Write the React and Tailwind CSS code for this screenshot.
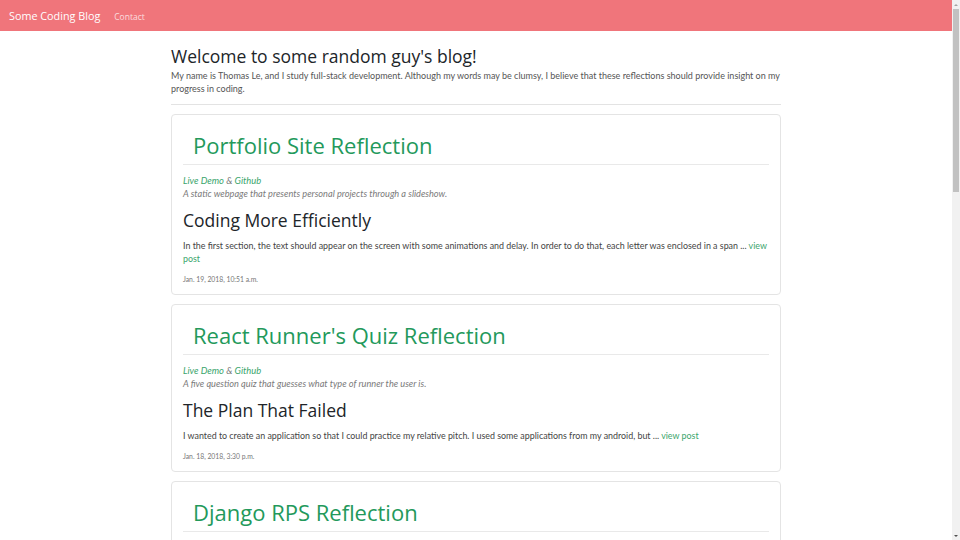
const posts = [
  {
    title: "Portfolio Site Reflection",
    desc: "A static webpage that presents personal projects through a slideshow.",
    heading: "Coding More Efficiently",
    body: "In the first section, the text should appear on the screen with some animations and delay. In order to do that, each letter was enclosed in a span ...",
    date: "Jan. 19, 2018, 10:51 a.m.",
  },
  {
    title: "React Runner's Quiz Reflection",
    desc: "A five question quiz that guesses what type of runner the user is.",
    heading: "The Plan That Failed",
    body: "I wanted to create an application so that I could practice my relative pitch. I used some applications from my android, but ...",
    date: "Jan. 18, 2018, 3:30 p.m.",
  },
  {
    title: "Django RPS Reflection",
    desc: "A rock, paper, scissors game built with Django.",
    heading: "Getting Started",
    body: "",
    date: "",
  },
];

const body = "font-['Lato',sans-serif]";

function PostCard({ post }) {
  return (
    <div className="mb-[9px] rounded-[4px] border border-[#e4e4e4] px-[11px] pb-[9px] pt-[16px]">
      <h3 className="pl-[10px] text-[22px] leading-[29px] text-[#23995b]">{post.title}</h3>
      <hr className="mt-[4px] border-t border-[#e9e9e9]" />
      <div className={`${body} mt-[9px] text-[9.4px] italic leading-[13px]`}>
        <a className="text-[#3aa56c]">Live Demo</a>
        <span className="text-[#777]"> &amp; </span>
        <a className="text-[#3aa56c]">Github</a>
      </div>
      <p className={`${body} text-[9.2px] italic leading-[13px] text-[#7a7a7a]`}>{post.desc}</p>
      <h4 className="mt-[9px] text-[17.5px] leading-[23px] text-[#212529]">{post.heading}</h4>
      <p className={`${body} mt-[7px] text-[8.9px] leading-[13px] text-[#444]`}>
        {post.body} <a className="text-[#3aa56c]">view post</a>
      </p>
      <p className={`${body} mt-[9px] text-[6.8px] leading-[11px] text-[#777]`}>{post.date}</p>
    </div>
  );
}

export default function App() {
  return (
    <div className="flex h-[540px] overflow-hidden bg-white font-['Open_Sans',sans-serif]">
      <div className="min-w-0 flex-1 overflow-hidden">
        <nav className="flex h-[31px] items-center bg-[#f0757b] px-[9px] pt-[2px]">
          <span className="text-[10.8px] text-white">Some Coding Blog</span>
          <span className="ml-[14px] pt-[1px] text-[8.5px] text-white/75">Contact</span>
        </nav>
        <main className="mx-auto w-[610px] pt-[13px]">
          <h1 className="text-[17.5px] leading-[25px] text-[#212529]">Welcome to some random guy's blog!</h1>
          <p className={`${body} text-[9px] leading-[13px] text-[#555]`}>
            My name is Thomas Le, and I study full-stack development. Although my words may be clumsy, I believe that these reflections should provide insight on my progress in coding.
          </p>
          <hr className="mt-[9px] mb-[9px] border-t border-[#e3e3e3]" />
          {posts.map((p) => (
            <PostCard key={p.title} post={p} />
          ))}
        </main>
      </div>
      <div className="flex w-[8px] flex-col bg-[#f1f1f1]">
        <div className="flex h-[9px] items-center justify-center">
          <div className="h-0 w-0 border-x-[2px] border-b-[2px] border-x-transparent border-b-[#a3a3a3]" />
        </div>
        <div className="mx-[1px] h-[183px] bg-[#c1c1c1]" />
        <div className="flex-1" />
        <div className="flex h-[9px] items-center justify-center">
          <div className="h-0 w-0 border-x-[2px] border-t-[2px] border-x-transparent border-t-[#505050]" />
        </div>
      </div>
    </div>
  );
}
